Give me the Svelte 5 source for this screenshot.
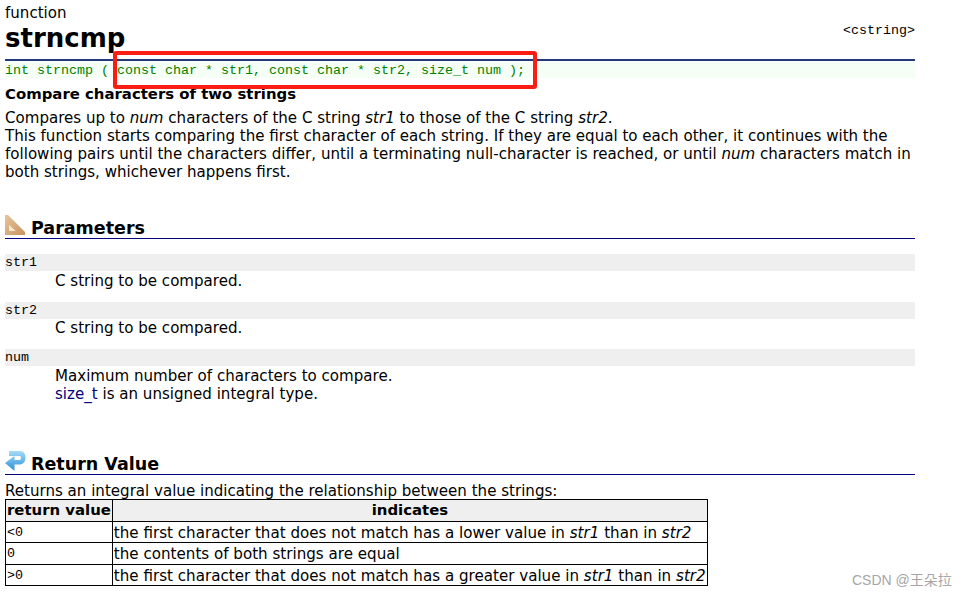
<script lang="ts">
  const rows = [
    { code: "<0", parts: ["the first character that does not match has a lower value in ", "str1", " than in ", "str2"] },
    { code: "0", parts: ["the contents of both strings are equal"] },
    { code: ">0", parts: ["the first character that does not match has a greater value in ", "str1", " than in ", "str2"] },
  ];
</script>

<div class="page">
  <header class="title">
    <div class="kind">function</div>
    <div class="name-row">
      <h1>strncmp</h1>
      <span class="header-ref">&lt;cstring&gt;</span>
    </div>
  </header>

  <pre class="proto">int strncmp ( const char * str1, const char * str2, size_t num );</pre>
  <div class="red-box"></div>

  <h2 class="summary">Compare characters of two strings</h2>
  <p class="desc">
    Compares up to <i>num</i> characters of the C string <i>str1</i> to those of the C string <i>str2</i>.<br />
    This function starts comparing the first character of each string. If they are equal to each other, it continues with the following pairs until the characters differ, until a terminating null-character is reached, or until <i>num</i> characters match in both strings, whichever happens first.
  </p>

  <section class="params">
    <h3>
      <svg class="icon" width="22" height="21" viewBox="0 0 22 21" aria-hidden="true">
        <defs>
          <linearGradient id="ruler" x1="0" y1="0" x2="1" y2="1">
            <stop offset="0" stop-color="#e8c59c" />
            <stop offset="1" stop-color="#c8935c" />
          </linearGradient>
        </defs>
        <path fill="url(#ruler)" fill-rule="evenodd" d="M0 0 L3 0 L20 17 L20 20 L0 20 Z M4 10 L4 16 L10.500 16 Z" />
        <path fill="#f1e2cd" opacity="0.8" d="M4 10 L10.500 16 L4 16 Z" />
      </svg>
      Parameters
    </h3>
    <dl>
      <dt>str1</dt>
      <dd>C string to be compared.</dd>
      <dt>str2</dt>
      <dd>C string to be compared.</dd>
      <dt>num</dt>
      <dd>Maximum number of characters to compare.<br /><span class="link">size_t</span> is an unsigned integral type.</dd>
    </dl>
  </section>

  <section class="ret">
    <h3>
      <svg class="icon" width="22" height="21" viewBox="0 0 22 21" aria-hidden="true">
        <defs>
          <linearGradient id="arrow" x1="0" y1="0" x2="0" y2="1">
            <stop offset="0" stop-color="#a4dbf8" />
            <stop offset="1" stop-color="#2a8fdc" />
          </linearGradient>
        </defs>
        <path fill="url(#arrow)" d="M4 0 H15 C19 0 20.500 3 20.500 6.500 C20.500 11 18 13.500 14 13.500 H9.500 V20 L0 12 L9.500 5 V9 H14 C15.500 9 16 8 16 7 C16 5.500 15.500 5 14 5 H4 Z" />
      </svg>
      Return Value
    </h3>
    <p class="ret-text">Returns an integral value indicating the relationship between the strings:</p>
    <table>
      <thead>
        <tr><th class="c1">return value</th><th>indicates</th></tr>
      </thead>
      <tbody>
        {#each rows as row}
          <tr>
            <td class="c1 code">{row.code}</td>
            <td>
              {#each row.parts as part, i}
                {#if i % 2 === 1}<i>{part}</i>{:else}{part}{/if}
              {/each}
            </td>
          </tr>
        {/each}
      </tbody>
    </table>
  </section>

  <div class="watermark">CSDN @王朵拉</div>
</div>

<style>
  :global(body) {
    margin: 0;
    background: #fff;
  }
  .page {
    position: relative;
    box-sizing: border-box;
    width: 967px;
    height: 596px;
    padding: 0 52px 0 5px;
    overflow: hidden;
    font-family: "DejaVu Sans", Verdana, sans-serif;
    font-size: 15.07px;
    line-height: 18px;
    color: #000;
  }
  .title {
    padding-top: 4px;
    height: 55px;
    box-sizing: border-box;
  }
  .kind {
    height: 18px;
  }
  .name-row {
    display: flex;
    justify-content: space-between;
    align-items: flex-start;
  }
  h1 {
    margin: 0;
    font-size: 26px;
    line-height: 32px;
    font-weight: bold;
  }
  .header-ref {
    font-family: "Liberation Mono", monospace;
    font-size: 13.33px;
  }
  .proto {
    margin: 4px 0 0;
    border-top: 2px solid #24397a;
    background: #f5fff5;
    color: #008000;
    font-family: "Liberation Mono", monospace;
    font-size: 13.33px;
    line-height: 19px;
    height: 17px;
  }
  .red-box {
    position: absolute;
    left: 113px;
    top: 51px;
    width: 416px;
    height: 30px;
    border: 4px solid #fb1c14;
    border-radius: 3px;
  }
  .summary {
    margin: 7px 0 0;
    font-size: 14.9px;
    line-height: 18px;
    font-weight: bold;
  }
  .desc {
    margin: 6px 0 0;
  }
  .params {
    margin-top: 33px;
  }
  h3 {
    margin: 0;
    display: flex;
    align-items: flex-end;
    gap: 4px;
    height: 24px;
    font-size: 17.5px;
    line-height: 20px;
    font-weight: bold;
    border-bottom: 1px solid #000080;
  }
  .icon {
    margin-bottom: 2px;
  }
  dl {
    margin: 15px 0 0;
  }
  dt {
    background: #efefef;
    font-family: "Liberation Mono", monospace;
    font-size: 13.33px;
    line-height: 18px;
    height: 17px;
  }
  dd {
    margin: 0.5px 0 12px 50px;
  }
  .link {
    color: #000080;
  }
  .ret {
    margin-top: 47.5px;
  }
  .ret-text {
    margin: 8px 0 0;
    line-height: 16px;
  }
  table {
    border-collapse: collapse;
    width: 703px;
  }
  th,
  td {
    border: 1px solid #000;
    padding: 2px 1px 0;
    height: 21.5px;
    box-sizing: border-box;
    white-space: nowrap;
    text-align: left;
    font-size: 15.12px;
  }
  th {
    background: #efefef;
    font-size: 14.9px;
    text-align: center;
    padding-top: 0;
  }
  .c1 {
    width: 105px;
  }
  td.code {
    font-family: "Liberation Mono", monospace;
    font-size: 13.33px;
  }
  .watermark {
    position: absolute;
    left: 852px;
    top: 571px;
    font-family: "Liberation Sans", "Noto Sans CJK SC", sans-serif;
    font-size: 14px;
    color: #a6a6a6;
  }
</style>
